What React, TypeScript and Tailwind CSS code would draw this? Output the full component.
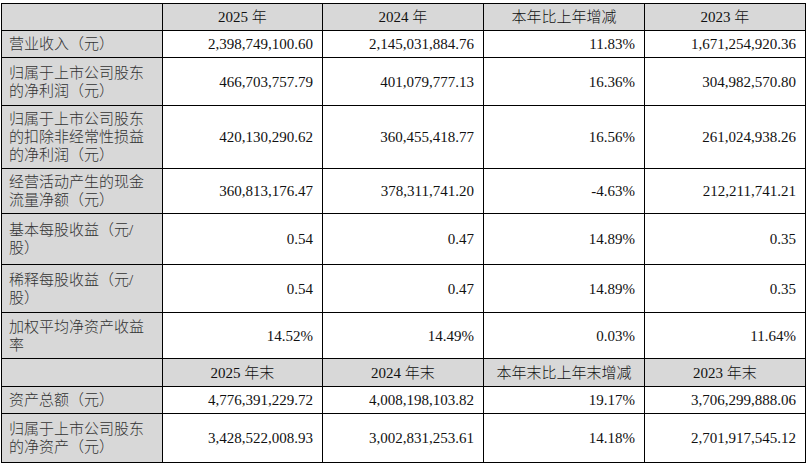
import React from "react";

type Row = { label: React.ReactNode; vals: string[]; header?: boolean };

const rows: Row[] = [
  { label: "", vals: ["2025 年", "2024 年", "本年比上年增减", "2023 年"], header: true },
  { label: "营业收入（元）", vals: ["2,398,749,100.60", "2,145,031,884.76", "11.83%", "1,671,254,920.36"] },
  {
    label: (
      <>
        归属于上市公司股东
        <br />
        的净利润（元）
      </>
    ),
    vals: ["466,703,757.79", "401,079,777.13", "16.36%", "304,982,570.80"],
  },
  {
    label: (
      <>
        归属于上市公司股东
        <br />
        的扣除非经常性损益
        <br />
        的净利润（元）
      </>
    ),
    vals: ["420,130,290.62", "360,455,418.77", "16.56%", "261,024,938.26"],
  },
  {
    label: (
      <>
        经营活动产生的现金
        <br />
        流量净额（元）
      </>
    ),
    vals: ["360,813,176.47", "378,311,741.20", "-4.63%", "212,211,741.21"],
  },
  {
    label: (
      <>
        基本每股收益（元/
        <br />
        股）
      </>
    ),
    vals: ["0.54", "0.47", "14.89%", "0.35"],
  },
  {
    label: (
      <>
        稀释每股收益（元/
        <br />
        股）
      </>
    ),
    vals: ["0.54", "0.47", "14.89%", "0.35"],
  },
  {
    label: (
      <>
        加权平均净资产收益
        <br />
        率
      </>
    ),
    vals: ["14.52%", "14.49%", "0.03%", "11.64%"],
  },
  { label: "", vals: ["2025 年末", "2024 年末", "本年末比上年末增减", "2023 年末"], header: true },
  { label: "资产总额（元）", vals: ["4,776,391,229.72", "4,008,198,103.82", "19.17%", "3,706,299,888.06"] },
  {
    label: (
      <>
        归属于上市公司股东
        <br />
        的净资产（元）
      </>
    ),
    vals: ["3,428,522,008.93", "3,002,831,253.61", "14.18%", "2,701,917,545.12"],
  },
];

export default function App() {
  return (
    <div className="w-[808px] h-[463px] bg-white overflow-hidden pt-[3px] pl-[1px]">
      <div
        className="grid w-fit gap-px bg-black p-px text-[15px] leading-[18px] text-[#111]"
        style={{ fontFamily: '"Liberation Serif", "Noto Sans CJK SC", serif' }}
      >
        <div className="grid grid-cols-[160px_159px_160px_160px_160px] grid-rows-[26px_26px_47px_62px_44px_50px_47px_45px_27px_26px_48px] gap-px">
          {rows.map((r, i) => (
            <React.Fragment key={i}>
              <div className="flex items-center bg-[#d8d8d8] pl-[7px] whitespace-nowrap text-[#333] font-light">
                <div>{r.label}</div>
              </div>
              {r.vals.map((v, j) =>
                r.header ? (
                  <div key={j} className="flex items-center justify-center bg-[#d8d8d8] whitespace-nowrap font-light">
                    {v}
                  </div>
                ) : (
                  <div key={j} className="flex items-center justify-end bg-white pr-[9px] whitespace-nowrap">
                    {v}
                  </div>
                )
              )}
            </React.Fragment>
          ))}
        </div>
      </div>
    </div>
  );
}
